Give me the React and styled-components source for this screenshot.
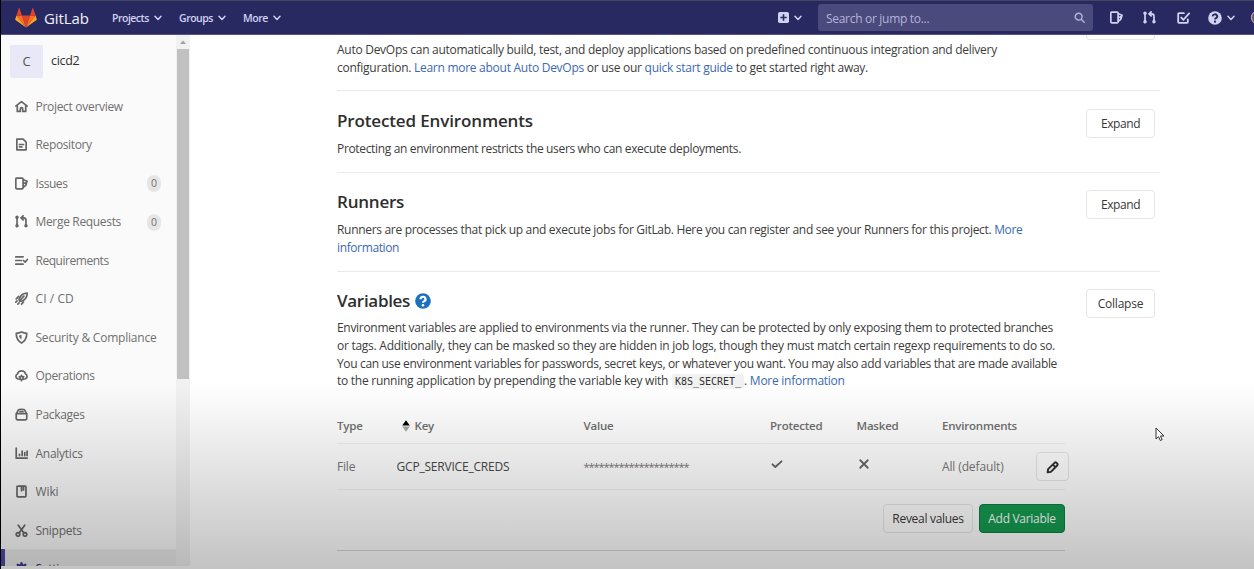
import React from 'react';
import styled, { createGlobalStyle } from 'styled-components';

const GlobalStyle = createGlobalStyle`
  * { box-sizing: border-box; }
  body { margin: 0; background: #fff; overflow: hidden; }
  a { color: #3b6ab0; text-decoration: none; }
`;

const Screen = styled.div`
  position: relative;
  display: flex;
  flex-direction: column;
  width: 1254px;
  height: 569px;
  overflow: hidden;
  border-left: 1px solid #000;
  background: #fff;
  color: #3c3c3c;
  font: 12px/18px 'Open Sans', 'Noto Sans', sans-serif;
  letter-spacing: -0.3px;
`;

const Shade = styled.div`
  position: absolute;
  inset: 384px 0 0 0;
  background: linear-gradient(rgba(0, 0, 0, 0), rgba(0, 0, 0, 0.235));
  pointer-events: none;
`;

/* Top bar */
const TopBar = styled.header`
  flex: none;
  display: flex;
  align-items: center;
  height: 35px;
  padding-left: 14px;
  background: #292961;
  border-top: 1px solid #45455f;
  border-bottom: 1px solid #54548a;
  color: #d1d1f0;
`;

const Brand = styled.div`
  display: flex;
  align-items: center;
  gap: 7px;
  width: 97px;
  color: #f1f1fb;
  font-size: 15px;
  letter-spacing: -0.07px;
`;

const NavItem = styled.div`
  display: flex;
  align-items: center;
  gap: 5px;
  width: ${(p) => p.$width}px;
  padding-top: 1px;
  font-size: 10.5px;
  font-weight: 600;
  letter-spacing: ${(p) => p.$spacing}px;
`;

const TopRight = styled.div`
  flex: 1;
  display: flex;
  align-items: center;
  justify-content: flex-end;
`;

const NewMenu = styled.div`
  display: flex;
  align-items: center;
  gap: 5px;
  margin-right: 16px;
`;

const Search = styled.div`
  display: flex;
  align-items: center;
  justify-content: space-between;
  width: 275px;
  height: 27px;
  padding: 2px 8px 0 8px;
  border-radius: 3px;
  background: #4b4a7d;
  color: #b4b3d9;
  svg { margin-bottom: 2px; }
`;

const TopIcons = styled.div`
  display: flex;
  align-items: center;
  width: 161px;
  padding-left: 17px;
`;

const IconSlot = styled.div`
  flex: none;
  display: flex;
  align-items: center;
  gap: 5px;
  width: ${(p) => p.$width}px;
`;

const Avatar = styled.div`
  flex: none;
  width: 15px;
  height: 15px;
  border-radius: 50%;
  background: #6d5660;
  border: 1px solid #cfc3c8;
`;

/* Sidebar */
const Body = styled.div`
  flex: 1;
  display: flex;
  min-height: 0;
`;

const SideWrap = styled.aside`
  flex: none;
  display: flex;
  width: 189px;
  height: 531px;
`;

const Sidebar = styled.nav`
  width: 175px;
  overflow: hidden;
  background: #fafafa;
`;

const Project = styled.div`
  display: flex;
  align-items: center;
  gap: 8px;
  height: 52px;
  padding: 0 0 0 9px;
  font-size: 12.5px;
  color: #303030;
`;

const ProjectMark = styled.div`
  display: flex;
  align-items: center;
  justify-content: center;
  width: 33px;
  height: 33px;
  border-radius: 2px;
  background: #e8e8f7;
  color: #555;
  font-size: 13px;
`;

const SideItem = styled.div`
  display: flex;
  align-items: center;
  height: 38.54px;
  padding: ${(p) => (p.$active ? '1px 15px 0 10px' : '1px 15px 0 14px')};
  border-left: ${(p) => (p.$active ? '4px solid #4b4ba3' : '0')};
  background: ${(p) => (p.$active ? '#ececec' : 'transparent')};
  color: ${(p) => (p.$active ? '#3a3666' : '#707070')};
  letter-spacing: ${(p) => p.$spacing}px;
  svg { flex: none; margin: 0 7.5px 1px 0; color: ${(p) => (p.$active ? '#3d3790' : '#666')}; }
`;

const Count = styled.span`
  margin-left: auto;
  width: 14px;
  height: 17px;
  border-radius: 8px;
  background: #e6e6e6;
  color: #707070;
  font-size: 10.5px;
  line-height: 17px;
  text-align: center;
  letter-spacing: 0;
`;

const ScrollTrack = styled.div`
  display: flex;
  flex-direction: column;
  align-items: center;
  width: 14px;
  background: #f1f1f1;
`;

const ScrollArrow = styled.div`
  display: flex;
  align-items: center;
  justify-content: center;
  height: 14px;
`;

const ScrollThumb = styled.div`
  width: 12px;
  height: 330px;
  background: #c1c1c1;
`;

/* Settings sections */
const Main = styled.main`
  width: 970px;
  padding: 6px 0 0 147px;
`;

const Section = styled.section`
  display: flex;
  justify-content: space-between;
  align-items: flex-start;
  padding: ${(p) => p.$top || 17}px 5px 14px 0;
  border-bottom: 1px solid #e9e9e9;
`;

const Intro = styled(Section)`
  height: 50px;
  padding: 0 5px 0 0;
`;

const VariablesHead = styled(Section)`
  padding-bottom: 0;
  border-bottom: 0;
  line-height: 17.75px;
`;

const Title = styled.h4`
  display: flex;
  align-items: center;
  gap: 5px;
  margin: 0 0 7px;
  height: ${(p) => p.$height || 24}px;
  font-size: 17px;
  font-weight: 600;
  letter-spacing: ${(p) => p.$spacing}px;
  color: #2e2e2e;
`;

const Line = styled.div`
  white-space: nowrap;
  letter-spacing: ${(p) => p.$spacing}px;
`;

const Button = styled.button`
  flex: none;
  height: 29px;
  width: ${(p) => p.$width}px;
  padding: 1px 0 0;
  border: 1px solid ${(p) => (p.$primary ? '#0f7d42' : '#e6e6e6')};
  border-radius: 4px;
  background: ${(p) => (p.$primary ? '#159b50' : 'transparent')};
  color: ${(p) => (p.$primary ? '#fff' : '#383838')};
  font: inherit;
  letter-spacing: ${(p) => p.$spacing || -0.3}px;
  display: flex;
  align-items: center;
  justify-content: center;
`;

const ClippedButton = styled(Button)`
  height: 5px;
  border-top: 0;
  border-radius: 0 0 4px 4px;
  margin-top: -6px;
`;

const Code = styled.code`
  display: inline-block;
  height: 15px;
  margin: 0 0 0 1px;
  padding: 0 3px;
  border-radius: 3px;
  background: #f1f1f1;
  color: #303030;
  font: 10px/16px 'DejaVu Sans Mono', 'Liberation Mono', monospace;
  letter-spacing: 0;
`;

const Table = styled.div`
  width: 728px;
  margin-top: 19px;
`;

const TableRow = styled.div`
  display: grid;
  grid-template-columns: 59.5px 187px 186.5px 86.5px 85.5px 94px 33px;
  align-items: center;
  height: ${(p) => p.$height}px;
  border-bottom: 1px solid #f0f0f0;
  color: #666;
`;

const HeadCell = styled.div`
  display: flex;
  align-items: center;
  gap: 5px;
  padding-left: ${(p) => p.$indent || 0}px;
  font-size: 11.5px;
  font-weight: 600;
  letter-spacing: -0.2px;
  color: #707070;
`;

const Cell = styled.div`
  padding-top: 1px;
  color: ${(p) => (p.$dark ? '#484848' : '#777')};
  letter-spacing: ${(p) => p.$spacing ?? -0.2}px;
`;

const StateCell = styled.div`
  padding: 0 0 5px 1px;
  svg { display: block; }
`;

const Masked = styled(Cell)`
  font-size: 11px;
  letter-spacing: -1.06px;
`;

const Actions = styled.div`
  display: flex;
  justify-content: flex-end;
  gap: 6px;
  width: 728px;
  height: 61px;
  padding-top: 14px;
  border-bottom: 1px solid #d6d6d6;
`;

const Pointer = styled.svg`
  position: absolute;
  left: 1154px;
  top: 427px;
`;

/* Icons */
const Icon = ({ size = 13, width = 2.1, children }) => (
  <svg width={size} height={size} viewBox="0 0 16 16" fill="none" stroke="currentColor"
    strokeWidth={width} strokeLinecap="round" strokeLinejoin="round">{children}</svg>
);

const Chevron = () => (
  <svg width="8" height="6" viewBox="0 0 8 6" fill="none" stroke="currentColor" strokeWidth="1.5"
    strokeLinecap="round" strokeLinejoin="round"><path d="M1 1.2 4 4.4 7 1.2" /></svg>
);

const icons = {
  home: <><path d="M1 7.500 8 2l7 5.500" /><path d="M2.800 7v7h3.700v-3a1.500 1.500 0 0 1 3 0v3h3.700V7" /></>,
  doc: <><path d="M2.300 1.500H10l3.700 3.500v9.500H2.300z" /><path d="M5.500 8h5M5.500 11h3" /></>,
  issues: <><path d="M2.300 1.500h6.400a1.300 1.300 0 0 1 1.300 1.300v10.400a1.300 1.300 0 0 1-1.300 1.300H2.300A1.300 1.300 0 0 1 1 13.200V2.800a1.300 1.300 0 0 1 1.300-1.300z" /><path d="m10.500 3.300 4.300 2-1.600 5-2.700 2.200M10.500 8l3.500-1" /></>,
  merge: <><path d="M2.500 3v10M13.500 13V6.500a3 3 0 0 0-3-3H8" /><path d="M10 1 7.500 3.500 10 6" /><circle cx="2.500" cy="2.700" r="1.100" fill="currentColor" /><circle cx="2.500" cy="13.300" r="1.100" fill="currentColor" /><circle cx="13.500" cy="13.300" r="1.100" fill="currentColor" /></>,
  requirements: <path d="M1 3.500h9M1 8h7M1 12.500h9M10.500 8l2 2L15.500 6.500" />,
  rocket: <><path d="M5 8.500C7 4 10.500 1.500 15 1.500c0 4-2.500 8-7 10L5.500 11z" /><path d="M11 5 6 10.500M4.500 5.500 1.500 8.500M1 12.500l1.500-1.500M3.500 15l1.500-1.500M8 14.800l2.500-2.500" /></>,
  shield: <><path d="M8 1.200c2 1 4.200 1.500 6.500 1.600 0 5.600-1.500 9.200-6.500 12C3 12 1.500 8.400 1.500 2.800 3.800 2.700 6 2.200 8 1.200z" /><path d="M8 4.500v6C6 9 5.200 7.500 5 5.500z" fill="currentColor" stroke="none" /></>,
  cloud: <><path d="M3.500 12.200A3.200 3.200 0 0 1 3 6.200 5.200 5.200 0 0 1 13 6.200a3.200 3.200 0 0 1-.5 6" /><circle cx="8" cy="11" r="2" /><path d="M8 7.800v.6M8 13.700v.7M5.200 9.500l.5.300M10.800 9.500l-.5.300M5.200 12.600l.5-.3M10.800 12.600l-.5-.3" /></>,
  package: <><path d="M1.500 7h13v6a1.500 1.500 0 0 1-1.500 1.500H3A1.500 1.500 0 0 1 1.500 13z" /><path d="M2 6.500 4 2.500C5 1.200 11 1.200 12 2.500l2 4M6.200 4.500h3.600" /></>,
  chart: <path d="M1.500 1.500v12.300H15M5.500 9v1.500M8.800 5v5.500M12 7v3.500M14.900 5v5.500" />,
  book: <><rect x="2.500" y="1.500" width="11" height="13" rx="1" /><path d="M8 2v5M10.500 2v4" /></>,
  scissors: <><circle cx="3.700" cy="12.800" r="2.200" /><circle cx="12.300" cy="12.800" r="2.200" /><path d="M4 1.500 11 11M12 1.500 5 11" /></>,
  gear: <><circle cx="8" cy="8" r="4" strokeWidth="3" /><path d="M8 1.500v2M8 12.500v2M1.500 8h2M12.500 8h2M3.400 3.400l1.400 1.400M12.600 3.400l-1.400 1.400" strokeWidth="3" /></>,
  todo: <><path d="M9 2.500H3.500a1 1 0 0 0-1 1v9a1 1 0 0 0 1 1h9a1 1 0 0 0 1-1V9.500" /><path d="M6 7.500 8.500 10 15 2.800" /></>,
  search: <><circle cx="6.800" cy="6.800" r="5" /><path d="m10.800 10.800 4 4" /></>,
  check: <path d="M2 8.500 5.800 12l8.200-7.500" />,
  cross: <path d="M3 3l10 10M13 3 3 13" />,
};

const Tanuki = () => (
  <svg width="22" height="20" viewBox="0 0 22 20">
    <path d="M11 19.500 15 7.500H7z" fill="#e24329" />
    <path d="M11 19.500 7 7.500H1.400z" fill="#fc6d26" />
    <path d="M11 19.500 15 7.500h5.600z" fill="#fc6d26" />
    <path d="M1.400 7.500.2 11.200c-.1.400 0 .7.300.9L11 19.500z" fill="#fca326" />
    <path d="m20.600 7.500 1.200 3.700c.1.400 0 .7-.3.900L11 19.500z" fill="#fca326" />
    <path d="M1.400 7.500H7L4.600.4c-.1-.4-.6-.4-.8 0z" fill="#e24329" />
    <path d="M20.600 7.500H15L17.400.4c.1-.4.6-.4.8 0z" fill="#e24329" />
  </svg>
);

const PlusSquare = () => (
  <svg width="11" height="11" viewBox="0 0 11 11">
    <rect width="11" height="11" rx="1.800" fill="currentColor" />
    <path d="M5.500 2.300v6.400M2.300 5.500h6.400" stroke="#292961" strokeWidth="1.600" />
  </svg>
);

const Question = ({ size, ink, fill }) => (
  <svg width={size} height={size} viewBox="0 0 16 16" fill="none">
    <circle cx="8" cy="8" r="7.800" fill={fill} />
    <path d="M5.500 6.200a2.500 2.300 0 1 1 3.700 1.900C8.300 8.600 8 8.900 8 9.800" stroke={ink} strokeWidth="2.200" />
    <circle cx="8" cy="12.200" r="1.300" fill={ink} />
  </svg>
);

const Pencil = () => (
  <svg width="13" height="13" viewBox="0 0 16 16" fill="none" stroke="#303030" strokeWidth="2.400" strokeLinejoin="round">
    <path d="M2 14l.6-4L10.500 2.300a1.700 1.700 0 0 1 2.400 0l.8.800a1.700 1.700 0 0 1 0 2.400L6 13.400z" />
    <path d="m8.500 4.500 3 3" />
  </svg>
);

const SortArrows = () => (
  <svg width="8" height="12" viewBox="0 0 8 12">
    <path d="M4 .3 7.800 5.400H.2z" fill="#000" />
    <path d="M4 11.700 7.800 6.600H.2z" fill="#a8a8a8" />
  </svg>
);

const sideItems = [
  ['home', 'Project overview', -0.3],
  ['doc', 'Repository', -0.36],
  ['issues', 'Issues', -0.45, 0],
  ['merge', 'Merge Requests', -0.33, 0],
  ['requirements', 'Requirements', -0.46],
  ['rocket', 'CI / CD', 0.08],
  ['shield', 'Security & Compliance', -0.21],
  ['cloud', 'Operations', -0.35],
  ['package', 'Packages', -0.31],
  ['chart', 'Analytics', -0.26],
  ['book', 'Wiki', -0.1],
  ['scissors', 'Snippets', -0.29],
];

export default function App() {
  return (
    <Screen>
      <GlobalStyle />
      <TopBar>
        <Brand><Tanuki />GitLab</Brand>
        <NavItem $width={67} $spacing={-0.5}>Projects <Chevron /></NavItem>
        <NavItem $width={64} $spacing={-0.48}>Groups <Chevron /></NavItem>
        <NavItem $width={40} $spacing={-0.42}>More <Chevron /></NavItem>
        <TopRight>
          <NewMenu><PlusSquare /><Chevron /></NewMenu>
          <Search>Search or jump to...<Icon size={11} width={2.100}>{icons.search}</Icon></Search>
          <TopIcons>
            <IconSlot $width={33}><Icon>{icons.issues}</Icon></IconSlot>
            <IconSlot $width={33}><Icon>{icons.merge}</Icon></IconSlot>
            <IconSlot $width={31.500}><Icon size={14}>{icons.todo}</Icon></IconSlot>
            <IconSlot $width={43.500}><Question size={14} ink="#292961" fill="currentColor" /><Chevron /></IconSlot>
            <Avatar />
          </TopIcons>
        </TopRight>
      </TopBar>
      <Body>
        <SideWrap>
          <Sidebar>
            <Project><ProjectMark>C</ProjectMark>cicd2</Project>
            {sideItems.map(([icon, label, spacing, count]) => (
              <SideItem key={label} $spacing={spacing}>
                <Icon>{icons[icon]}</Icon>{label}
                {count !== undefined && <Count>{count}</Count>}
              </SideItem>
            ))}
            <SideItem $active $spacing={-0.3}><Icon>{icons.gear}</Icon>Settings</SideItem>
          </Sidebar>
          <ScrollTrack>
            <ScrollArrow><svg width="6" height="4" viewBox="0 0 6 4"><path d="M0 4 3 .5 6 4z" fill="#a3a3a3" /></svg></ScrollArrow>
            <ScrollThumb />
          </ScrollTrack>
        </SideWrap>
        <Main>
          <Intro>
            <div>
              <Line $spacing={-0.27}>Auto DevOps can automatically build, test, and deploy applications based on predefined continuous integration and delivery</Line>
              <Line $spacing={-0.27}>configuration. <a>Learn more about Auto DevOps</a> or use our <a>quick start guide</a> to get started right away.</Line>
            </div>
            <ClippedButton $width={69} aria-label="Expand" />
          </Intro>
          <Section $top={18}>
            <div>
              <Title $spacing={-0.14}>Protected Environments</Title>
              <Line $spacing={-0.34}>Protecting an environment restricts the users who can execute deployments.</Line>
            </div>
            <Button $width={69} $spacing={-0.42}>Expand</Button>
          </Section>
          <Section>
            <div>
              <Title $spacing={-0.22}>Runners</Title>
              <Line $spacing={-0.309}>Runners are processes that pick up and execute jobs for GitLab. Here you can register and see your Runners for this project. <a>More</a></Line>
              <Line $spacing={-0.38}><a>information</a></Line>
            </div>
            <Button $width={69} $spacing={-0.42}>Expand</Button>
          </Section>
          <VariablesHead>
            <div>
              <Title $spacing={-0.3} $height={23}>Variables <Question size={16} ink="#fff" fill="#1f6fbf" /></Title>
              <Line $spacing={-0.306}>Environment variables are applied to environments via the runner. They can be protected by only exposing them to protected branches</Line>
              <Line $spacing={-0.264}>or tags. Additionally, they can be masked so they are hidden in job logs, though they must match certain regexp requirements to do so.</Line>
              <Line $spacing={-0.345}>You can use environment variables for passwords, secret keys, or whatever you want. You may also add variables that are made available</Line>
              <Line $spacing={-0.263}>to the running application by prepending the variable key with <Code>K8S_SECRET_</Code>. <a>More information</a></Line>
            </div>
            <Button $width={69} $spacing={-0.22}>Collapse</Button>
          </VariablesHead>
          <Table>
            <TableRow $height={35}>
              <HeadCell>Type</HeadCell>
              <HeadCell $indent={5}><SortArrows />Key</HeadCell>
              <HeadCell>Value</HeadCell>
              <HeadCell>Protected</HeadCell>
              <HeadCell>Masked</HeadCell>
              <HeadCell>Environments</HeadCell>
            </TableRow>
            <TableRow $height={46}>
              <Cell>File</Cell>
              <Cell $dark>GCP_SERVICE_CREDS</Cell>
              <Masked>*********************</Masked>
              <StateCell><Icon size={12} width={2.600}>{icons.check}</Icon></StateCell>
              <StateCell><Icon size={12} width={2.400}>{icons.cross}</Icon></StateCell>
              <Cell $spacing={-0.13}>All (default)</Cell>
              <Button $width={33} aria-label="Edit"><Pencil /></Button>
            </TableRow>
          </Table>
          <Actions>
            <Button $width={90}>Reveal values</Button>
            <Button $width={86} $primary>Add Variable</Button>
          </Actions>
        </Main>
      </Body>
      <Shade />
      <Pointer width="10" height="15" viewBox="0 0 10 15">
        <path d="M1 1v11l2.600-2.300L5.300 13.500l1.800-.8L5.500 9H9z" fill="#fff" stroke="#333" strokeWidth="1" />
      </Pointer>
    </Screen>
  );
}
